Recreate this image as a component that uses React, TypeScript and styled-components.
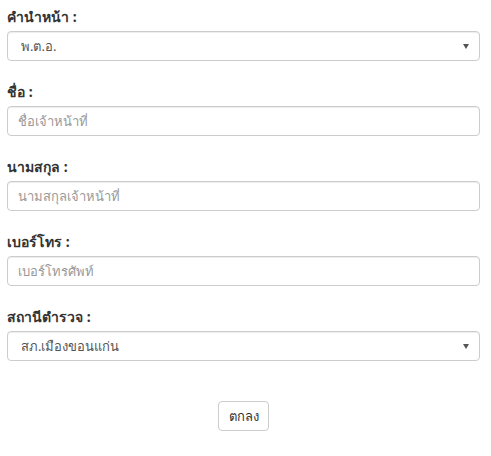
import { createGlobalStyle, styled } from 'styled-components'

const GlobalStyle = createGlobalStyle`
  body {
    margin: 0;
    background: #fff;
    font-family: Tahoma, "Noto Sans", "DejaVu Sans", sans-serif;
  }
`

type Field = {
  label: string
  kind: 'select' | 'input'
  value: string
}

const fields: Field[] = [
  { label: 'คำนำหน้า :', kind: 'select', value: 'พ.ต.อ.' },
  { label: 'ชื่อ :', kind: 'input', value: 'ชื่อเจ้าหน้าที่' },
  { label: 'นามสกุล :', kind: 'input', value: 'นามสกุลเจ้าหน้าที่' },
  { label: 'เบอร์โทร :', kind: 'input', value: 'เบอร์โทรศัพท์' },
  { label: 'สถานีตำรวจ :', kind: 'select', value: 'สภ.เมืองขอนแก่น' },
]

export default function App() {
  return (
    <>
      <GlobalStyle />
      <StyledForm>
        {fields.map((f) => (
          <StyledGroup key={f.label}>
            <StyledLabel>{f.label}</StyledLabel>
            {f.kind === 'select' ? (
              <StyledSelect>
                <span>{f.value}</span>
                <StyledCaret />
              </StyledSelect>
            ) : (
              <StyledInput placeholder={f.value} type={'text'} />
            )}
          </StyledGroup>
        ))}
        <StyledActions>
          <StyledButton type={'button'}>ตกลง</StyledButton>
        </StyledActions>
      </StyledForm>
    </>
  )
}

const StyledForm = styled.form`
  display: flex;
  flex-direction: column;
  padding: 7px 11px 0 7px;
`

const StyledGroup = styled.div`
  display: flex;
  flex-direction: column;
  margin: 0 0 21px 0;
`

const StyledLabel = styled.label`
  font-size: 14px;
  font-weight: 700;
  line-height: 20px;
  color: #333;
  margin: 0 0 4px 0;
`

const fieldBox = `
  box-sizing: border-box;
  width: 100%;
  height: 30px;
  border: 1px solid #ccc;
  border-radius: 4px;
  background: #fff;
  box-shadow: inset 0 1px 1px rgba(0, 0, 0, 0.075);
  font-family: Tahoma, "Noto Sans", "DejaVu Sans", sans-serif;
  font-size: 13px;
  color: #555;
`

const StyledInput = styled.input`
  ${fieldBox}
  padding: 0 10px;
  outline: none;

  &::placeholder {
    color: #999;
  }
`

const StyledSelect = styled.div`
  ${fieldBox}
  display: flex;
  align-items: center;
  justify-content: space-between;
  padding: 0 10px 0 13px;
`

const StyledCaret = styled.span`
  width: 0;
  height: 0;
  border-left: 3px solid transparent;
  border-right: 3px solid transparent;
  border-top: 5px solid #555;
`

const StyledActions = styled.div`
  display: flex;
  justify-content: center;
  padding: 19px 0 0 0;
`

const StyledButton = styled.button`
  box-sizing: border-box;
  width: 51px;
  height: 30px;
  border: 1px solid #ccc;
  border-radius: 4px;
  background: #fff;
  color: #333;
  font-family: Tahoma, "Noto Sans", "DejaVu Sans", sans-serif;
  font-size: 13px;
  padding: 0;
`
